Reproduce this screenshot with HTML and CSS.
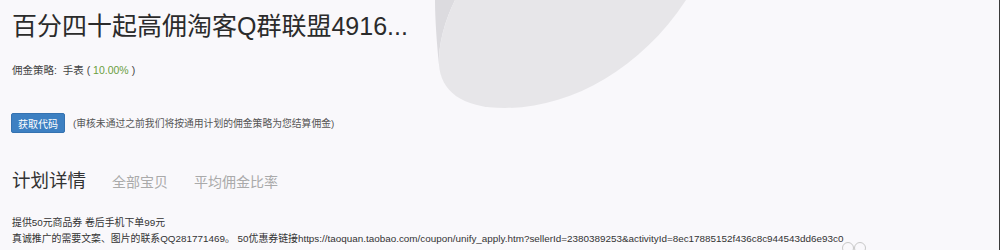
FILE: index.html
```html
<!DOCTYPE html>
<html lang="zh-CN">
<head>
    <meta charset="UTF-8">
    <title>计划详情</title>
    <link rel="stylesheet" href="styles.css">
</head>
<body>
    <div class="page">
        <svg class="blob" width="1000" height="250" viewBox="0 0 1000 250">
            <path d="M435 0 L455 0 C445 20 438 45 439 65 C437 45 435 20 435 0 Z" fill="#dcdbdf"/>
            <path d="M455 0 C445 20 438 45 439 65 C441 90 460 108 505 108 C570 108 640 70 686 0 Z" fill="#e7e6e9"/>
        </svg>
        <h1 class="title">百分四十起高佣淘客Q群联盟4916...</h1>
        <div class="policy">佣金策略: &nbsp;手表 ( <span class="rate">10.00%</span> )</div>
        <div class="action">
            <button class="btn">获取代码</button>
            <span class="note">(审核未通过之前我们将按通用计划的佣金策略为您结算佣金)</span>
        </div>
        <div class="tabs">
            <span class="tab active">计划详情</span>
            <span class="tab">全部宝贝</span>
            <span class="tab">平均佣金比率</span>
        </div>
        <div class="desc">
            <p>提供50元商品券 卷后手机下单99元</p>
            <p>真诚推广的需要文案、图片的联系QQ281771469。 50优惠券链接https://taoquan.taobao.com/coupon/unify_apply.htm?sellerId=2380389253&amp;activityId=8ec17885152f436c8c944543dd6e93c0</p>
        </div>
        <div class="rings"><i></i><i></i></div>
    </div>
</body>
</html>
```

FILE: styles.css
```css
html, body {
    margin: 0;
    height: 100%;
}
body {
    background: #f9f8fb;
    font-family: "Liberation Sans", "Noto Sans CJK SC", sans-serif;
    color: #333;
    overflow: hidden;
}
.page {
    position: relative;
    height: 250px;
    border-right: 1px solid #3a3a3a;
    box-sizing: border-box;
    padding: 9px 12px 0;
}
.blob {
    position: absolute;
    left: 0;
    top: 0;
}
.title {
    position: relative;
    margin: 0;
    font-size: 25px;
    font-weight: normal;
    line-height: 34px;
    color: #2b2b2b;
}
.policy {
    position: relative;
    margin-top: 19px;
    font-size: 10.5px;
    color: #444;
}
.rate {
    color: #6b9e3e;
}
.action {
    position: relative;
    margin-top: 36px;
    display: flex;
    align-items: center;
    gap: 8px;
}
.btn {
    font-family: inherit;
    font-size: 10px;
    color: #fff;
    background: #3d80c2;
    border: 1px solid #3572b0;
    border-radius: 2px;
    padding: 0 6px;
    height: 20px;
    margin-left: -1px;
}
.note {
    font-size: 9.8px;
    color: #555;
}
.tabs {
    position: relative;
    margin-top: 33px;
    display: flex;
    align-items: baseline;
    gap: 26px;
}
.tab {
    font-size: 14px;
    color: #aaa;
}
.tab.active {
    font-size: 18.5px;
    color: #333;
}
.desc {
    position: relative;
    margin-top: 23px;
    font-size: 9.9px;
    color: #333;
}
.desc p {
    margin: 0;
    line-height: 16px;
}
.rings {
    position: absolute;
    left: 842px;
    top: 242px;
    display: flex;
}
.rings i {
    width: 10px;
    height: 10px;
    border: 1px solid #c8c8c8;
    border-radius: 50%;
}
```
